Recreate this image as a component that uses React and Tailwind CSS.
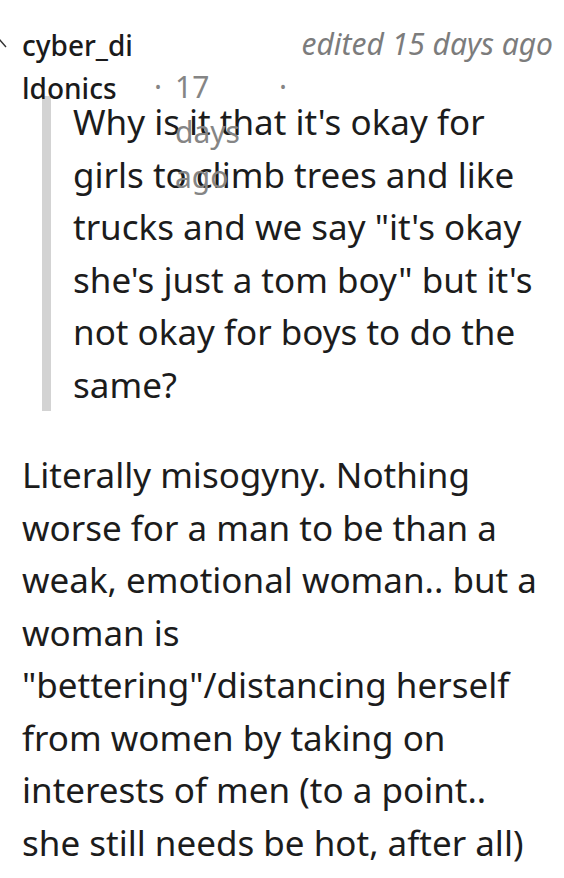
import React from "react";

export default function App() {
  return (
    <div
      className="min-h-[878px] w-[564px] bg-white text-[#1c1c1c] overflow-hidden"
      style={{ fontFamily: '"Noto Sans", "Open Sans", sans-serif' }}
    >
      <div className="pl-[22px] pr-[11px] pt-[24px]">
        <div className="relative flex h-[72px] items-start">
          <svg
            className="absolute left-[-31px] top-[13px]"
            width="16"
            height="12"
            viewBox="0 0 16 12"
            fill="none"
            stroke="#333"
            strokeWidth="1.4"
          >
            <path d="M1 10 L8 2 L15 10" />
          </svg>
          <div className="w-[132px] shrink-0 text-[28px] font-medium leading-[43px] text-[#1a1a1b]">
            cyber_di
            <br />
            ldonics
          </div>
          <div className="mt-[40px] flex shrink-0 text-[30px] leading-[45px] text-[#858585]">
            <span className="w-[21px]">·</span>
            <span className="w-[66px]">17 days ago</span>
            <span className="ml-[38px]">·</span>
          </div>
          <div className="ml-auto text-[30px] italic leading-[40px] text-[#7c7c7c]">
            edited 15 days ago
          </div>
        </div>
        <div className="ml-[20px] border-l-[9px] border-[#d3d3d3] pl-[22px] text-[35px] leading-[52.5px]">
          Why is it that it's okay for girls to climb trees and like trucks and
          we say "it's okay she's just a tom boy" but it's not okay for boys to
          do the same?
        </div>
        <p className="mt-[38px] text-[35px] leading-[52.5px]">
          Literally misogyny. Nothing worse for a man to be than a weak,
          emotional woman.. but a woman is "bettering"/distancing herself from
          women by taking on interests of men (to a point.. she still needs be
          hot, after all)
        </p>
      </div>
    </div>
  );
}
